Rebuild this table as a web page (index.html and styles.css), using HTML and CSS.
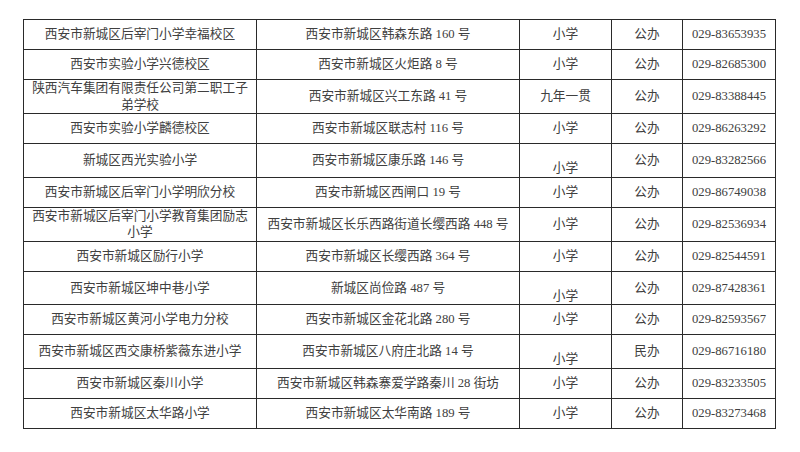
FILE: index.html
```html
<!DOCTYPE html>
<html lang="zh-CN">
<head>
<meta charset="utf-8">
<title>西安市新城区小学名单</title>
<link rel="stylesheet" href="styles.css">
</head>
<body>
<div class="page">
<table class="schools">
<colgroup>
<col class="c-name"><col class="c-addr"><col class="c-type"><col class="c-kind"><col class="c-tel">
</colgroup>
<tbody>
<tr><td>西安市新城区后宰门小学幸福校区</td><td>西安市新城区韩森东路 160 号</td><td>小学</td><td>公办</td><td>029-83653935</td></tr>
<tr><td>西安市实验小学兴德校区</td><td>西安市新城区火炬路 8 号</td><td>小学</td><td>公办</td><td>029-82685300</td></tr>
<tr><td>陕西汽车集团有限责任公司第二职工子<br>弟学校</td><td>西安市新城区兴工东路 41 号</td><td>九年一贯</td><td>公办</td><td>029-83388445</td></tr>
<tr><td>西安市实验小学麟德校区</td><td>西安市新城区联志村 116 号</td><td>小学</td><td>公办</td><td>029-86263292</td></tr>
<tr><td>新城区西光实验小学</td><td>西安市新城区康乐路 146 号</td><td class="drop">小学</td><td>公办</td><td>029-83282566</td></tr>
<tr><td>西安市新城区后宰门小学明欣分校</td><td>西安市新城区西闸口 19 号</td><td>小学</td><td>公办</td><td>029-86749038</td></tr>
<tr><td>西安市新城区后宰门小学教育集团励志<br>小学</td><td>西安市新城区长乐西路街道长缨西路 448 号</td><td>小学</td><td>公办</td><td>029-82536934</td></tr>
<tr><td>西安市新城区励行小学</td><td>西安市新城区长缨西路 364 号</td><td>小学</td><td>公办</td><td>029-82544591</td></tr>
<tr><td>西安市新城区坤中巷小学</td><td>新城区尚俭路 487 号</td><td class="drop">小学</td><td>公办</td><td>029-87428361</td></tr>
<tr><td>西安市新城区黄河小学电力分校</td><td>西安市新城区金花北路 280 号</td><td>小学</td><td>公办</td><td>029-82593567</td></tr>
<tr><td>西安市新城区西交康桥紫薇东进小学</td><td>西安市新城区八府庄北路 14 号</td><td class="drop">小学</td><td>民办</td><td>029-86716180</td></tr>
<tr><td>西安市新城区秦川小学</td><td>西安市新城区韩森寨爱学路秦川 28 街坊</td><td>小学</td><td>公办</td><td>029-83233505</td></tr>
<tr><td>西安市新城区太华路小学</td><td>西安市新城区太华南路 189 号</td><td>小学</td><td>公办</td><td>029-83273468</td></tr>
</tbody>
</table>
</div>
</body>
</html>
```

FILE: styles.css
```css
html, body {
  margin: 0;
  padding: 0;
  background: #ffffff;
}

.page {
  padding: 19px 0 0 23px;
}

.schools {
  border-collapse: collapse;
  table-layout: fixed;
  width: 753px;
  font-family: "Liberation Serif", "Noto Sans CJK SC", serif;
  font-size: 12.7px;
  line-height: 16.5px;
  color: #404040;
}

.c-name { width: 233px; }
.c-addr { width: 263px; }
.c-type { width: 92px; }
.c-kind { width: 71px; }
.c-tel  { width: 93px; }

.schools td {
  border: 1px solid #2a2a2a;
  height: 29px;
  padding: 0 6px;
  text-align: center;
  vertical-align: middle;
  white-space: nowrap;
  overflow: hidden;
}

.schools td.drop {
  height: auto;
  padding-top: 16px;
}
```
